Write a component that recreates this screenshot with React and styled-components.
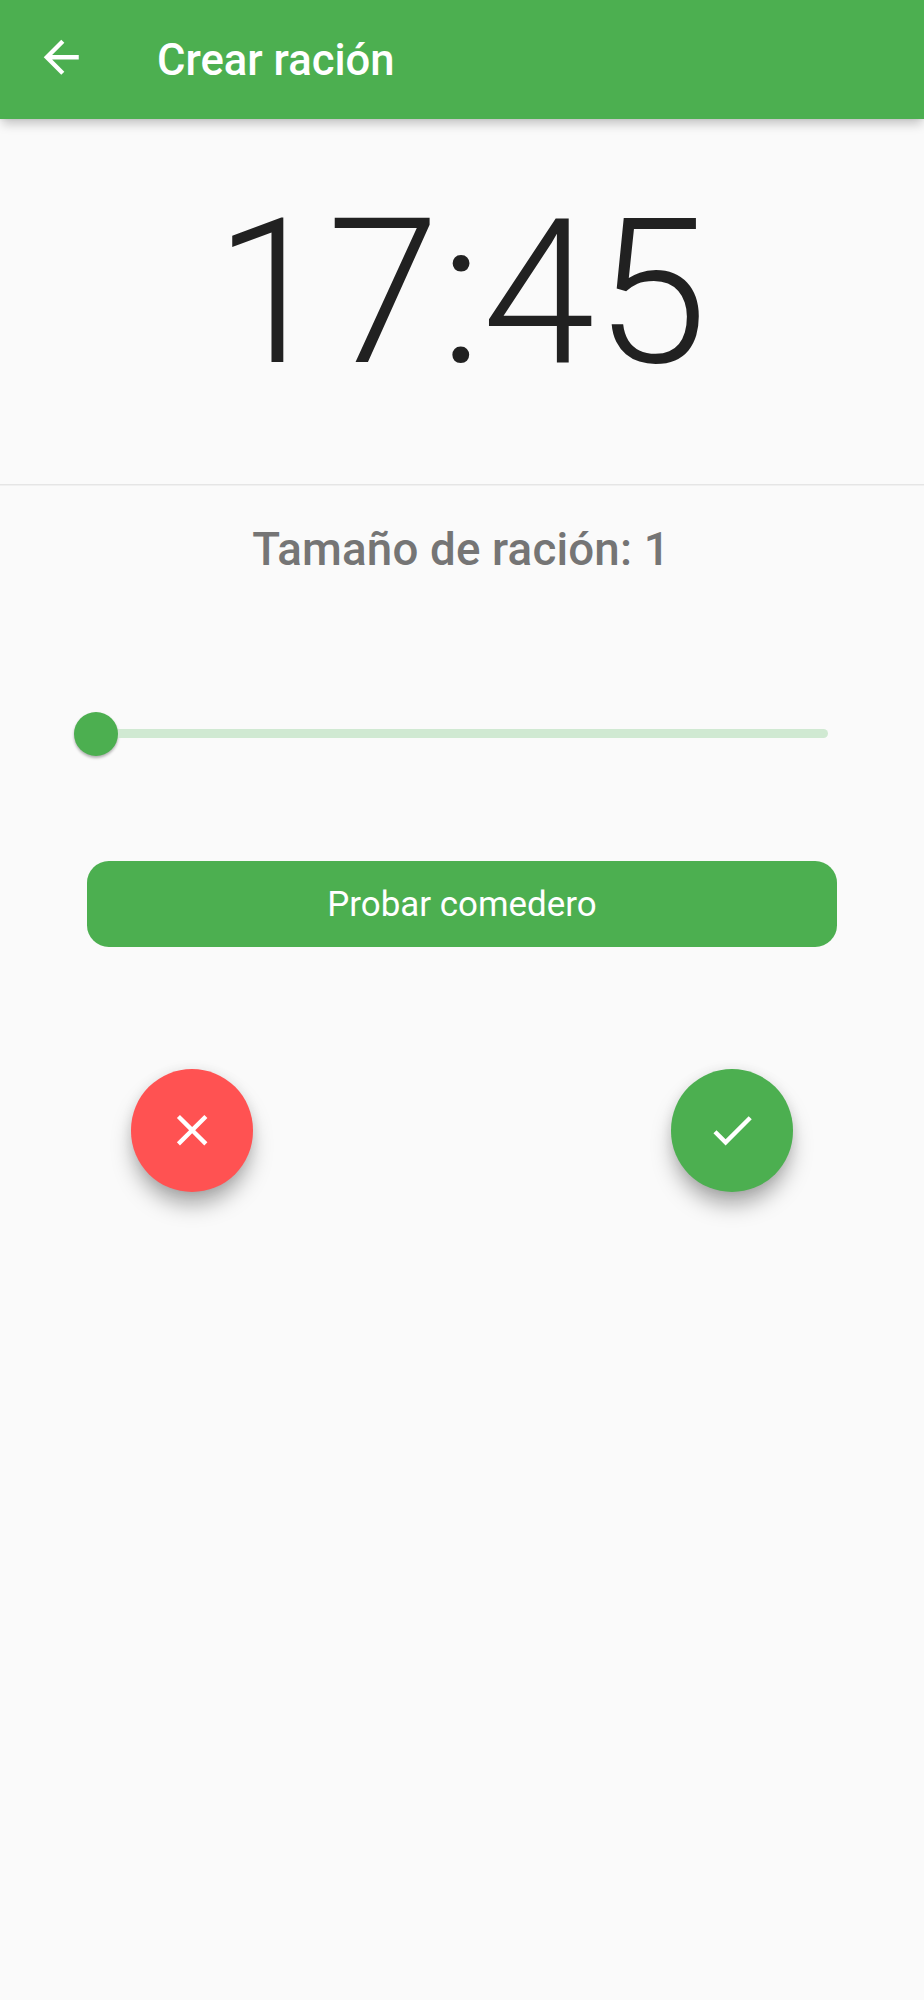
import React from 'react';
import styled, { createGlobalStyle } from 'styled-components';

const Global = createGlobalStyle`
  * { box-sizing: border-box; }
  body { margin: 0; background: #fafafa; font-family: Roboto, "Liberation Sans", sans-serif; }
`;
const Screen = styled.main`
  width: 924px; min-height: 2000px; background: #fafafa;
  display: flex; flex-direction: column;
`;
const AppBar = styled.header`
  height: 119px; flex: none; background: #4caf50; color: #fff;
  display: flex; align-items: center; padding-left: 34.5px;
  box-shadow: 0 7px 10px -2px rgba(0,0,0,.21), 0 0 4px rgba(0,0,0,.08);
`;
const BackButton = styled.button`
  border: 0; padding: 0; background: none; color: inherit; display: flex;
  width: 52.5px; height: 52.5px; margin-right: 70px; margin-bottom: 4px;
`;
const Title = styled.h1`
  margin: 2px 0 0; font-size: 43.6px; line-height: 52px; font-weight: 500; white-space: nowrap;
`;
const TimePanel = styled.section`
  height: 366px; border-bottom: 1px solid #e5e5e5; box-shadow: 0 1px #f0f0f0;
  text-align: center; padding-top: 54px; padding-right: 2px;
`;
const Time = styled.time`
  display: block; color: #212121; font-size: 203px; font-weight: 300; line-height: 240px;
`;
const PortionLabel = styled.h2`
  margin: 38px 0 0; padding-right: 2px; text-align: center; color: #757575;
  font-size: 45.7px; line-height: 54px; font-weight: 500; letter-spacing: .17px;
`;
const Slider = styled.div`
  margin: 134.5px 96px 0 74.3px; height: 44px; display: flex; align-items: center;
`;
const Thumb = styled.span`
  width: 44px; height: 44px; border-radius: 50%; background: #4caf50; flex: none;
  box-shadow: 0 2px 3px rgba(0,0,0,.3);
`;
const Track = styled.span`
  height: 9px; flex: 1; background: #d0e9d2; border-radius: 0 4.5px 4.5px 0;
`;
const TestButton = styled.button`
  margin: 105.7px 87.2px 0; height: 85.4px; border: 0; border-radius: 21.8px; padding: 2px 0 0;
  background: #4caf50; color: #fff; font: 400 34.9px/42px Roboto, sans-serif;
`;
const Actions = styled.div`
  margin: 122.9px 131px 0; display: flex; justify-content: space-between;
`;
const RoundButton = styled.button`
  width: 122.2px; height: 122.2px; border: 0; padding: 0 0 1px; border-radius: 50%;
  background: ${p => p.$color}; color: #fff; display: flex; align-items: center; justify-content: center;
  box-shadow: 0 15px 22px -3px rgba(0,0,0,.34), 0 0 12px rgba(0,0,0,.08);
`;
const Icon = ({ d, size }) => (
  <svg width={size} height={size} viewBox="0 0 24 24" fill="currentColor" aria-hidden="true"><path d={d} /></svg>
);

export default function App() {
  return (
    <>
      <Global />
      <Screen>
        <AppBar>
          <BackButton aria-label="Atrás"><Icon size={52.5} d="M20 11H7.83l5.59-5.59L12 4l-8 8 8 8 1.41-1.41L7.83 13H20v-2z" /></BackButton>
          <Title>Crear ración</Title>
        </AppBar>
        <TimePanel><Time>17:45</Time></TimePanel>
        <PortionLabel>Tamaño de ración: 1</PortionLabel>
        <Slider><Thumb /><Track /></Slider>
        <TestButton>Probar comedero</TestButton>
        <Actions>
          <RoundButton $color="#ff5252" aria-label="Cancelar"><Icon size={52.3} d="M19 6.41L17.59 5 12 10.59 6.41 5 5 6.41 10.59 12 5 17.59 6.41 19 12 13.41 17.59 19 19 17.59 13.41 12z" /></RoundButton>
          <RoundButton $color="#4caf50" aria-label="Aceptar"><Icon size={52.3} d="M9 16.17L4.83 12l-1.42 1.41L9 19 21 7l-1.41-1.41z" /></RoundButton>
        </Actions>
      </Screen>
    </>
  );
}
